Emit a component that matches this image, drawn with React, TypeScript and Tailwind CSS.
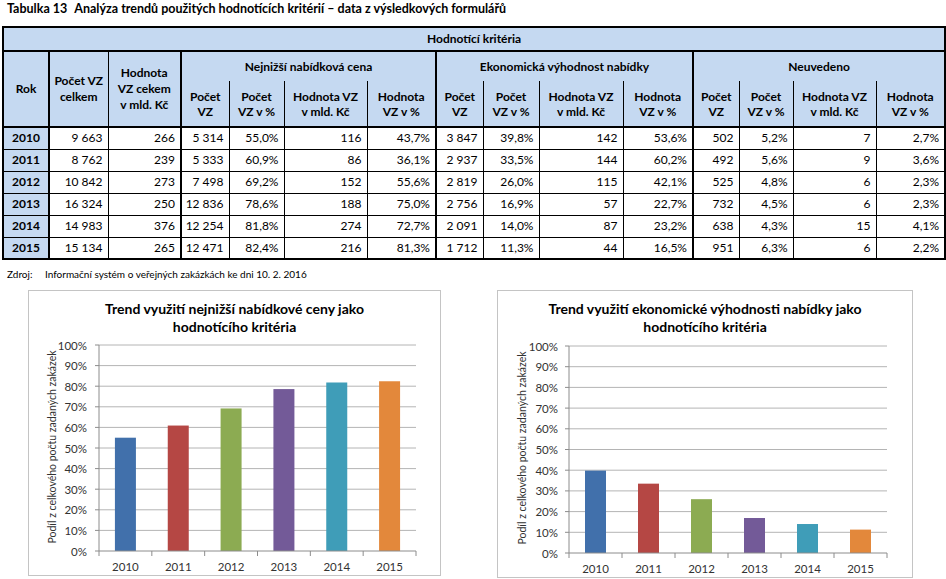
const colW = [
  'w-[46px]', 'w-[59px]', 'w-[73px]',
  'w-[48px]', 'w-[55px]', 'w-[83px]', 'w-[69px]',
  'w-[47px]', 'w-[56px]', 'w-[84px]', 'w-[70px]',
  'w-[46px]', 'w-[54px]', 'w-[83px]', 'w-[69px]',
];

// columns that close a block get the heavy line on the right
const thick = [0, 2, 6, 10];

const rows = [
  ['2010', '9 663', '266', '5 314', '55,0%', '116', '43,7%', '3 847', '39,8%', '142', '53,6%', '502', '5,2%', '7', '2,7%'],
  ['2011', '8 762', '239', '5 333', '60,9%', '86', '36,1%', '2 937', '33,5%', '144', '60,2%', '492', '5,6%', '9', '3,6%'],
  ['2012', '10 842', '273', '7 498', '69,2%', '152', '55,6%', '2 819', '26,0%', '115', '42,1%', '525', '4,8%', '6', '2,3%'],
  ['2013', '16 324', '250', '12 836', '78,6%', '188', '75,0%', '2 756', '16,9%', '57', '22,7%', '732', '4,5%', '6', '2,3%'],
  ['2014', '14 983', '376', '12 254', '81,8%', '274', '72,7%', '2 091', '14,0%', '87', '23,2%', '638', '4,3%', '15', '4,1%'],
  ['2015', '15 134', '265', '12 471', '82,4%', '216', '81,3%', '1 712', '11,3%', '44', '16,5%', '951', '6,3%', '6', '2,2%'],
];

const groups = ['Nejnižší nabídková cena', 'Ekonomická výhodnost nabídky', 'Neuvedeno'];
const subs: [string, string][] = [
  ['Počet', 'VZ'],
  ['Počet', 'VZ v %'],
  ['Hodnota VZ', 'v mld. Kč'],
  ['Hodnota', 'VZ v %'],
];

const years = ['2010', '2011', '2012', '2013', '2014', '2015'];
const barColors = ['#4170ab', '#b54744', '#8cab52', '#735a98', '#3f9db8', '#e3883b'];

type ChartProps = {
  box: string;
  w: number;
  h: number;
  lines: [string, string];
  values: number[];
  ax: number;
  right: number;
  y0: number;
  y100: number;
  labX: number;
  titleX: number;
  titleY: number;
  xLabY: number;
};

function Chart({ box, w, h, lines, values, ax, right, y0, y100, labX, titleX, titleY, xLabY }: ChartProps) {
  const cat = (right - ax) / 6;
  const step = (y0 - y100) / 10;
  return (
    <div className={`${box} flex flex-col border border-[#c4c4c4] bg-white`}>
      <div className="h-[45px] pt-[9px] text-center text-[14px] leading-[18px] font-bold text-black">
        <div>{lines[0]}</div>
        <div>{lines[1]}</div>
      </div>
      <svg width={w - 2} height={h - 47} viewBox={`1 46 ${w - 2} ${h - 47}`} className="text-[#333]">
        {Array.from({ length: 11 }, (_, i) => {
          const y = y0 - i * step;
          return (
            <g key={i}>
              {i > 0 && <line x1={ax} x2={right} y1={y} y2={y} stroke="#b4b4b4" strokeWidth={1} />}
              <line x1={ax - 4} x2={ax} y1={y} y2={y} stroke="#8c8c8c" strokeWidth={1} />
              <text x={labX} y={y} textAnchor="end" dominantBaseline="central" fontSize={11.5} fill="#333">
                {i * 10}%
              </text>
            </g>
          );
        })}
        {values.map((v, i) => (
          <rect
            key={i}
            x={ax + (i + 0.5) * cat - 10.5}
            y={y0 - (v / 100) * (y0 - y100)}
            width={21}
            height={(v / 100) * (y0 - y100)}
            fill={barColors[i]}
          />
        ))}
        <line x1={ax} x2={ax} y1={y100} y2={y0} stroke="#8c8c8c" strokeWidth={1} />
        <line x1={ax} x2={right} y1={y0} y2={y0} stroke="#8c8c8c" strokeWidth={1} />
        {Array.from({ length: 7 }, (_, k) => (
          <line key={k} x1={ax + k * cat} x2={ax + k * cat} y1={y0} y2={y0 + 5} stroke="#8c8c8c" strokeWidth={1} />
        ))}
        {years.map((y, i) => (
          <text key={y} x={ax + (i + 0.5) * cat} y={xLabY} textAnchor="middle" dominantBaseline="central" fontSize={11.5} fill="#333">
            {y}
          </text>
        ))}
        <text
          x={titleX}
          y={titleY}
          transform={`rotate(-90 ${titleX} ${titleY})`}
          textAnchor="middle"
          dominantBaseline="central"
          fontSize={10.5}
          fill="#333"
        >
          Podíl z celkového počtu zadaných zakázek
        </text>
      </svg>
    </div>
  );
}

export default function App() {
  return (
    <div className="h-[579px] w-[946px] overflow-hidden bg-white font-[Lato,sans-serif] text-black">
      <div className="pl-[7px] pt-[1px] text-[12.5px] leading-[16px] font-bold">
        Tabulka 13<span className="ml-[7px]">Analýza trendů použitých hodnotících kritérií – data z výsledkových formulářů</span>
      </div>

      <table className="mt-[9px] ml-[2px] w-[942px] table-fixed border-collapse border-2 border-black text-[12px]">
        <colgroup>
          {colW.map((c, i) => (
            <col key={i} className={c} />
          ))}
        </colgroup>
        <thead className="bg-[#c5d9f1]">
          <tr className="h-[24px]">
            <th colSpan={15} className="border-b-2 border-black text-center font-bold">
              Hodnotící kritéria
            </th>
          </tr>
          <tr className="h-[30px]">
            <th rowSpan={2} className="border-r-2 border-b-2 border-black text-center font-bold">
              Rok
            </th>
            <th rowSpan={2} className="border-r border-b-2 border-black text-center leading-[16px] font-bold">
              Počet VZ
              <br />
              celkem
            </th>
            <th rowSpan={2} className="border-r-2 border-b-2 border-black text-center leading-[16px] font-bold">
              Hodnota
              <br />
              VZ cekem
              <br />v mld. Kč
            </th>
            {groups.map((g, i) => (
              <th key={g} colSpan={4} className={`border-b-0 border-black text-center font-bold ${i < 2 ? 'border-r-2' : ''}`}>
                {g}
              </th>
            ))}
          </tr>
          <tr className="h-[46px]">
            {groups.map((g, gi) =>
              subs.map((s, si) => (
                <th
                  key={g + si}
                  className={`border-t-0 border-b-2 border-black text-center leading-[15px] font-bold ${
                    si === 3 && gi < 2 ? 'border-r-2' : si < 3 ? 'border-r' : ''
                  }`}
                >
                  {s[0]}
                  <br />
                  {s[1]}
                </th>
              ))
            )}
          </tr>
        </thead>
        <tbody>
          {rows.map((r) => (
            <tr key={r[0]} className="h-[22px]">
              {r.map((c, i) => (
                <td
                  key={i}
                  className={`border border-black ${thick.includes(i) ? 'border-r-2' : ''} ${
                    i === 0 ? 'bg-[#c5d9f1] text-center font-bold' : 'pr-[5px] text-right'
                  }`}
                >
                  {c}
                </td>
              ))}
            </tr>
          ))}
        </tbody>
      </table>

      <div className="mt-[8px] flex pl-[7px] text-[10px] leading-[12px]">
        <span className="w-[38px]">Zdroj:</span>
        <span>Informační systém o veřejných zakázkách ke dni 10. 2. 2016</span>
      </div>

      <div className="mt-[10px] flex gap-[56px] pl-[28px]">
        <Chart
          box="w-[413px] h-[286px]"
          w={413}
          h={286}
          lines={['Trend využití nejnižší nabídkové ceny jako', 'hodnotícího kritéria']}
          values={[55.0, 60.9, 69.2, 78.6, 81.8, 82.4]}
          ax={71}
          right={388}
          y0={261}
          y100={55}
          labX={59}
          titleX={24}
          titleY={157}
          xLabY={276}
        />
        <Chart
          box="w-[416px] h-[288px]"
          w={416}
          h={288}
          lines={['Trend využití ekonomické výhodnosti nabídky jako', 'hodnotícího kritéria']}
          values={[39.8, 33.5, 26.0, 16.9, 14.0, 11.3]}
          ax={72}
          right={390}
          y0={263}
          y100={56}
          labX={61}
          titleX={25}
          titleY={158}
          xLabY={278}
        />
      </div>
    </div>
  );
}
